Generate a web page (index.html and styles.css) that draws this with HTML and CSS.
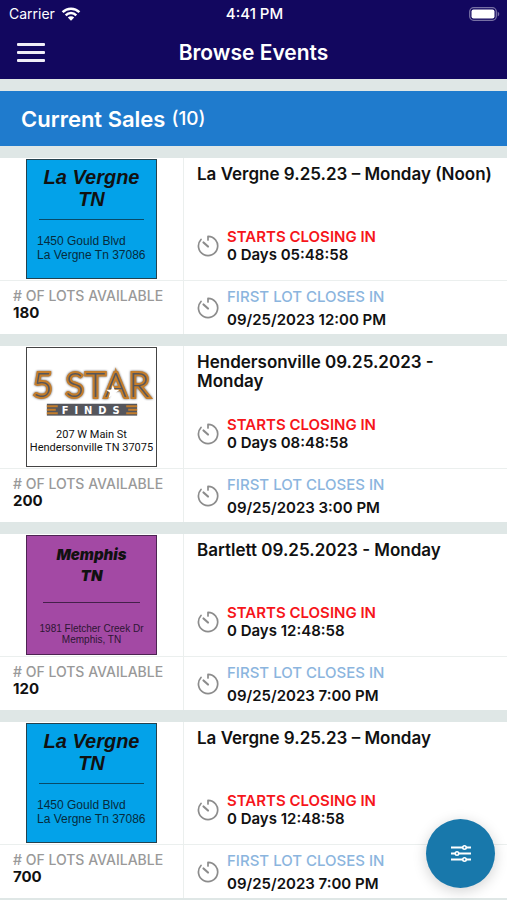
FILE: index.html
```html
<!DOCTYPE html>
<html lang="en">
<head>
<meta charset="utf-8">
<meta name="viewport" content="width=device-width, initial-scale=1">
<title>Browse Events</title>
<link rel="stylesheet" href="styles.css">
</head>
<body>
<svg class="defs" aria-hidden="true">
  <symbol id="timer" viewBox="0 0 22 22">
    <g fill="none" stroke="#8c8c8c" stroke-width="1.700" stroke-linecap="round" stroke-linejoin="round">
      <path d="M11 5V1.400A9.600 9.600 0 1 1 4 4.500"/>
      <path d="M6.500 7.500L11 11.500" stroke-width="2.200"/>
    </g>
  </symbol>
</svg>

<header class="top">
  <div class="status">
    <div class="carrier">Carrier
      <svg width="20" height="14" viewBox="0 0 20 14" aria-hidden="true">
        <g fill="none" stroke="#fff" stroke-width="2.500">
          <path d="M1.600 5.200a12 12 0 0 1 16.800 0"/>
          <path d="M4.700 8.300a7.500 7.500 0 0 1 10.600 0"/>
        </g>
        <path d="M10 13.800L6.800 10.600a4.500 4.500 0 0 1 6.400 0z" fill="#fff"/>
      </svg>
    </div>
    <div>4:41 PM</div>
    <svg class="battery" width="31" height="14" viewBox="0 0 31 14" aria-hidden="true">
      <rect x=".7" y=".7" width="26.600" height="12.600" rx="4" fill="none" stroke="#7770a4" stroke-width="1.300"/>
      <rect x="2.500" y="2.500" width="23" height="9" rx="2" fill="#fff"/>
      <path d="M28.700 4.500q1.600 1 1.600 2.500t-1.600 2.500z" fill="#7770a4"/>
    </svg>
  </div>
  <div class="nav">
    <button class="menu" aria-label="Menu"><span></span><span></span><span></span></button>
    <h1>Browse Events</h1>
  </div>
</header>

<main>
  <h2 class="section">Current Sales <span>(10)</span></h2>

  <article class="card">
    <div class="pic">
      <div class="thumb blue">
        <p class="city">La Vergne<br>TN</p>
        <p class="addr">1450 Gould Blvd<br>La Vergne Tn 37086</p>
      </div>
    </div>
    <div class="info">
      <h3>La Vergne 9.25.23 – Monday (Noon)</h3>
      <div class="time"><svg class="timer"><use href="#timer"/></svg><p><span class="red">STARTS CLOSING IN</span><b>0 Days 05:48:58</b></p></div>
    </div>
    <div class="lots"><span>#&nbsp;OF LOTS AVAILABLE</span><b>180</b></div>
    <div class="time closes"><svg class="timer"><use href="#timer"/></svg><p><span class="sky">FIRST LOT CLOSES IN</span><b>09/25/2023 12:00 PM</b></p></div>
  </article>

  <article class="card">
    <div class="pic">
      <div class="thumb white">
        <svg class="logo" viewBox="0 0 130 48" role="img" aria-label="5 Star Finds">
          <text class="word" x="6" y="27">5 STAR</text>
          <path d="M86.500 15l1.800 4.800h5l-4 3.200 1.500 5-4.300-3-4.300 3 1.500-5-4-3.200h5z" fill="#fff"/>
          <rect x="20" y="34" width="91" height="12" fill="#55565c"/>
          <path d="M20 36.500h11M20 40h9M20 43.500h11M100 36.500h11M102 40h9M100 43.500h11" stroke="#c47d2b" stroke-width="2"/>
          <text class="finds" x="35" y="44">FINDS</text>
        </svg>
        <p class="addr">207 W Main St<br>Hendersonville TN 37075</p>
      </div>
    </div>
    <div class="info">
      <h3>Hendersonville 09.25.2023 - Monday</h3>
      <div class="time"><svg class="timer"><use href="#timer"/></svg><p><span class="red">STARTS CLOSING IN</span><b>0 Days 08:48:58</b></p></div>
    </div>
    <div class="lots"><span>#&nbsp;OF LOTS AVAILABLE</span><b>200</b></div>
    <div class="time closes"><svg class="timer"><use href="#timer"/></svg><p><span class="sky">FIRST LOT CLOSES IN</span><b>09/25/2023 3:00 PM</b></p></div>
  </article>

  <article class="card">
    <div class="pic">
      <div class="thumb purple">
        <p class="city">Memphis<br>TN</p>
        <p class="addr">1981 Fletcher Creek Dr<br>Memphis, TN</p>
      </div>
    </div>
    <div class="info">
      <h3>Bartlett 09.25.2023 - Monday</h3>
      <div class="time"><svg class="timer"><use href="#timer"/></svg><p><span class="red">STARTS CLOSING IN</span><b>0 Days 12:48:58</b></p></div>
    </div>
    <div class="lots"><span>#&nbsp;OF LOTS AVAILABLE</span><b>120</b></div>
    <div class="time closes"><svg class="timer"><use href="#timer"/></svg><p><span class="sky">FIRST LOT CLOSES IN</span><b>09/25/2023 7:00 PM</b></p></div>
  </article>

  <article class="card">
    <div class="pic">
      <div class="thumb blue">
        <p class="city">La Vergne<br>TN</p>
        <p class="addr">1450 Gould Blvd<br>La Vergne Tn 37086</p>
      </div>
    </div>
    <div class="info">
      <h3>La Vergne 9.25.23 – Monday</h3>
      <div class="time"><svg class="timer"><use href="#timer"/></svg><p><span class="red">STARTS CLOSING IN</span><b>0 Days 12:48:58</b></p></div>
    </div>
    <div class="lots"><span>#&nbsp;OF LOTS AVAILABLE</span><b>700</b></div>
    <div class="time closes"><svg class="timer"><use href="#timer"/></svg><p><span class="sky">FIRST LOT CLOSES IN</span><b>09/25/2023 7:00 PM</b></p></div>
  </article>
</main>

<button class="filter" aria-label="Filter events">
  <svg width="20" height="17" viewBox="0 0 20 17" aria-hidden="true">
    <path d="M0 2.500h20M0 8.500h20M0 14.500h20" stroke="#fff" stroke-width="1.800"/>
    <g fill="#1878ab" stroke="#fff" stroke-width="1.600">
      <circle cx="13.500" cy="2.500" r="1.700"/><circle cx="6" cy="8.500" r="1.700"/><circle cx="13.500" cy="14.500" r="1.700"/>
    </g>
  </svg>
</button>
</body>
</html>
```
FILE: styles.css
```css
* { box-sizing: border-box; }
body {
  margin: 0;
  background: #dfe7e6;
  color: #111;
  font-family: Inter, "Liberation Sans", sans-serif;
}
h1, h2, h3, p { margin: 0; }
button { border: 0; padding: 0; cursor: pointer; }
.defs { display: none; }

.top { background: #12075f; color: #fff; height: 79px; }
.status {
  display: grid;
  grid-template-columns: 1fr auto 1fr;
  align-items: center;
  height: 27px;
  padding: 0 7px 0 9px;
  font-size: 15px;
  font-weight: 500;
}
.carrier { display: flex; align-items: center; gap: 6px; font-size: 14px; font-weight: 400; }
.battery { justify-self: end; }
.nav {
  display: grid;
  grid-template-columns: 1fr auto 1fr;
  align-items: center;
  height: 51px;
  padding: 0 17px;
}
.menu {
  display: flex;
  flex-direction: column;
  gap: 5px;
  width: 28px;
  background: none;
}
.menu span { width: 28px; height: 3px; border-radius: 1px; background: #f0eef8; }
h1 { font-size: 21px; font-weight: 600; }

.section {
  display: flex;
  align-items: center;
  gap: 6px;
  height: 55px;
  margin: 12px 0;
  padding: 0 21px;
  background: #1f7bcd;
  color: #fff;
  font-size: 22px;
  font-weight: 600;
}
.section span { font-size: 19px; font-weight: 500; }

.card {
  display: grid;
  grid-template-columns: 184px 1fr;
  grid-template-rows: 122px 54px;
  background: #fff;
}
.card + .card { margin-top: 12px; }
.pic, .lots { border-right: 1px solid #ebefee; }
.lots, .closes { border-top: 1px solid #ebefee; }
.pic { display: flex; justify-content: center; align-items: center; }
.info {
  display: flex;
  flex-direction: column;
  justify-content: space-between;
  padding: 7px 12px 16px 13px;
}
h3 { font-size: 17px; font-weight: 600; line-height: 19px; }
.time { display: flex; align-items: center; gap: 8px; font-size: 15px; }
.timer { flex: none; width: 22px; height: 22px; }
.time p { display: flex; flex-direction: column; line-height: 18px; }
.time b { font-weight: 600; }
.red { color: #f6161b; font-weight: 600; }
.sky { color: #8bb5de; font-weight: 500; }
.closes { padding: 0 13px; }
.closes p { line-height: 23px; }
.lots {
  display: flex;
  flex-direction: column;
  padding: 6px 0 0 13px;
  font-size: 14px;
  line-height: 17px;
}
.lots span { color: #999; font-weight: 500; }
.lots b { font-size: 15px; font-weight: 700; }

.thumb {
  width: 131px;
  height: 120px;
  border: 1px solid #23424f;
  font-family: "Liberation Sans", Arial, sans-serif;
}
.blue { background: #03a2e9; padding: 6px 10px; }
.blue .city {
  padding-bottom: 9px;
  margin: 0 2px;
  border-bottom: 1px solid #084b69;
  font: italic 700 20px/22px "Liberation Sans", Arial, sans-serif;
  text-align: center;
}
.blue .addr { padding-top: 14px; font-size: 12px; line-height: 14px; color: #062b3d; white-space: nowrap; }
.white { background: #fff; border-color: #444; padding-top: 22px; text-align: center; }
.white .addr { margin-top: 10px; font: 11px/13px Roboto, sans-serif; white-space: nowrap; }
.logo { display: block; width: 100%; overflow: visible; }
.word {
  font: 300 34px Lato, sans-serif;
  fill: #55565c;
  stroke: #c47d2b;
  stroke-width: 4px;
  paint-order: stroke;
  letter-spacing: 2px;
  filter: drop-shadow(0 0 1px #55565c);
}
.finds { font: 700 10px "DejaVu Sans", sans-serif; fill: #fff; letter-spacing: 6px; }
.purple { background: #a349a4; border-color: #4d2452; padding: 8px 14px; text-align: center; }
.purple .city {
  margin: 0 2px;
  padding-bottom: 16px;
  border-bottom: 1px solid #44204a;
  font: italic 900 15px/21px Inter, sans-serif;
}
.purple .addr { margin: 20px -8px 0; font-size: 10px; line-height: 11px; color: #2d1633; white-space: nowrap; }

.filter {
  position: fixed;
  right: 12px;
  bottom: 12px;
  display: grid;
  place-items: center;
  width: 69px;
  height: 69px;
  border-radius: 50%;
  background: #1878ab;
  box-shadow: 0 3px 14px rgba(0, 0, 0, .18);
}
```
